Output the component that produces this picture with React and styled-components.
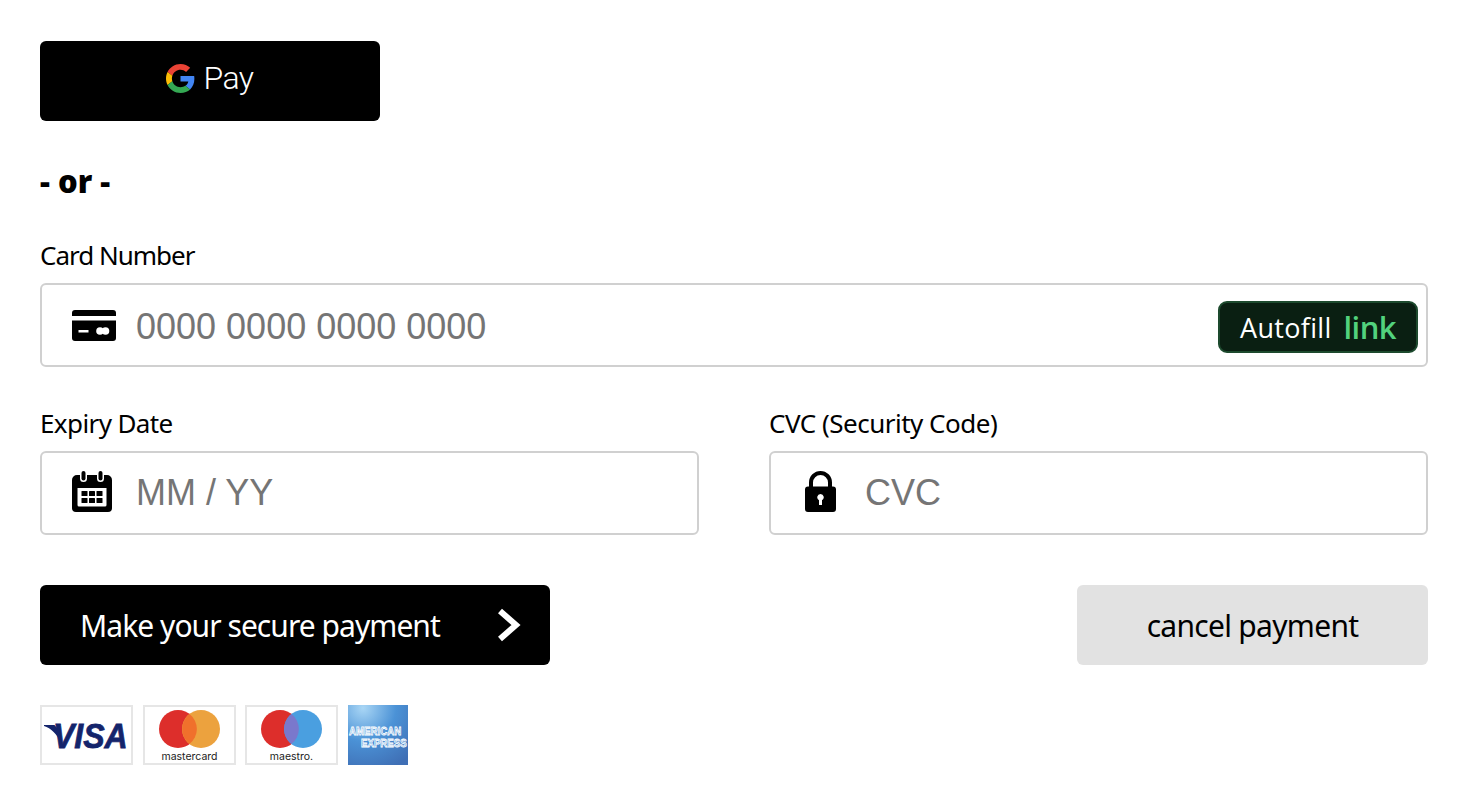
import React from 'react';
import styled, { createGlobalStyle } from 'styled-components';

const GlobalStyle = createGlobalStyle`
  html,
  body {
    margin: 0;
    background: #fff;
    color: #000;
    font-family: 'Noto Sans', 'Open Sans', sans-serif;
  }
`;

const Page = styled.form`
  box-sizing: border-box;
  width: 1478px;
  height: 808px;
  padding: 41px 50px 0 40px;
  display: flex;
  flex-direction: column;
`;

const Button = styled.button`
  display: flex;
  align-items: center;
  height: 80px;
  padding: 0;
  border: 0;
  border-radius: 6px;
  font-family: inherit;
`;

const GooglePayButton = styled(Button)`
  width: 340px;
  justify-content: center;
  gap: 8px;
  padding-bottom: 6px;
  background: #000;
  color: #fff;
`;

const PayText = styled.span`
  font-family: Roboto, sans-serif;
  font-size: 32px;
  font-weight: 300;
  letter-spacing: -0.5px;
  line-height: 1;
`;

const Or = styled.div`
  margin-top: 42px;
  font-size: 31px;
  font-weight: 900;
  line-height: 36px;
`;

const Label = styled.label`
  display: block;
  height: 36px;
  font-size: 26px;
  line-height: 34px;
  letter-spacing: ${(p) => p.$tracking}px;
  margin-bottom: 9px;
`;

const CardBlock = styled.div`
  margin-top: 39px;
`;

const Row = styled.div`
  display: grid;
  grid-template-columns: 1fr 1fr;
  column-gap: 70px;
  margin-top: 39px;
`;

const Field = styled.div`
  box-sizing: border-box;
  display: flex;
  align-items: center;
  height: 84px;
  padding: 0 8px 0 30px;
  border: 2px solid #d0d0d0;
  border-radius: 6px;
`;

const IconSlot = styled.span`
  flex: none;
  box-sizing: border-box;
  width: 46px;
  height: 46px;
  margin: 0 18px ${(p) => p.$lift || 0}px 0;
  padding-left: ${(p) => p.$inset || 0}px;
  display: flex;
  align-items: center;
`;

const Input = styled.input`
  flex: 1;
  min-width: 0;
  padding: 0;
  margin-top: ${(p) => p.$drop || 0}px;
  border: 0;
  outline: 0;
  background: transparent;
  font-family: 'Liberation Sans', Arial, sans-serif;
  font-size: 36px;

  &::placeholder {
    color: #757575;
    opacity: 1;
  }
`;

const Autofill = styled.span`
  flex: none;
  box-sizing: border-box;
  width: 200px;
  height: 52px;
  margin-top: 4px;
  display: flex;
  align-items: center;
  justify-content: center;
  gap: 12px;
  border: 2px solid #1d4a2e;
  border-radius: 9px;
  background: #0a1f12;
  color: #fff;
  font-family: 'Open Sans', sans-serif;
  font-size: 27px;
  letter-spacing: 0.3px;
`;

const AutofillBrand = styled.b`
  color: #52d27d;
  font-size: 31px;
  font-weight: 600;
  letter-spacing: -0.6px;
  line-height: 1;
`;

const Actions = styled.div`
  display: flex;
  justify-content: space-between;
  margin-top: 50px;
`;

const PayButton = styled(Button)`
  width: 510px;
  justify-content: space-between;
  padding: 0 29px 0 40px;
  background: #000;
  color: #fff;
  font-size: 30px;
  letter-spacing: -0.95px;
`;

const CancelButton = styled(Button)`
  width: 351px;
  justify-content: center;
  background: #e2e2e2;
  color: #000;
  font-size: 30px;
  letter-spacing: -0.7px;
`;

const Cards = styled.div`
  display: flex;
  gap: 9.67px;
  margin-top: 40px;
`;

const CardLogo = styled.div`
  box-sizing: border-box;
  width: ${(p) => (p.$bare ? 60 : 93)}px;
  height: 60px;
  border: ${(p) => (p.$bare ? 0 : '2px solid #e6e6e6')};
  background: #fff;

  svg {
    display: block;
  }
`;

const GoogleG = () => (
  <svg width="29" height="29" viewBox="0 0 48 48">
    <path fill="#EA4335" d="M24 9.5c3.54 0 6.71 1.22 9.21 3.6l6.85-6.85C35.9 2.38 30.47 0 24 0 14.62 0 6.51 5.38 2.56 13.22l7.98 6.19C12.43 13.72 17.74 9.5 24 9.5z" />
    <path fill="#4285F4" d="M46.98 24.55c0-1.57-.15-3.09-.38-4.55H24v9.02h12.94c-.58 2.96-2.26 5.48-4.78 7.18l7.73 6c4.51-4.18 7.09-10.36 7.09-17.65z" />
    <path fill="#FBBC05" d="M10.53 28.59c-.48-1.45-.76-2.99-.76-4.59s.27-3.14.76-4.59l-7.98-6.19C.92 16.46 0 20.12 0 24c0 3.88.92 7.54 2.56 10.78l7.97-6.19z" />
    <path fill="#34A853" d="M24 48c6.48 0 11.93-2.13 15.89-5.81l-7.73-6c-2.15 1.45-4.92 2.3-8.16 2.3-6.26 0-11.57-4.22-13.47-9.91l-7.98 6.19C6.51 42.62 14.62 48 24 48z" />
  </svg>
);

const CardIcon = () => (
  <svg width="44" height="31" viewBox="0 0 44 31">
    <path d="M3 0h38a3 3 0 0 1 3 3v3H0V3a3 3 0 0 1 3-3z" />
    <path d="M0 10.500h44V28a3 3 0 0 1-3 3H3a3 3 0 0 1-3-3z" />
    <rect x="6.500" y="20" width="10" height="2.500" fill="#fff" />
    <circle cx="28" cy="21" r="3.800" fill="#fff" />
    <circle cx="33.500" cy="21" r="3.800" fill="#fff" />
  </svg>
);

const CalendarIcon = () => (
  <svg width="40" height="41" viewBox="0 0 40 41">
    <path
      fillRule="evenodd"
      d="M5 4h3v3.500a3.500 3.500 0 0 0 7 0V4h10v3.500a3.500 3.500 0 0 0 7 0V4h3a5 5 0 0 1 5 5v28a4 4 0 0 1-4 4H4a4 4 0 0 1-4-4V9a5 5 0 0 1 5-5zM5.500 17v17a1.500 1.500 0 0 0 1.500 1.500h26a1.500 1.500 0 0 0 1.500-1.500V17z"
    />
    <rect x="9.500" y="0" width="4" height="9.500" rx="2" />
    <rect x="26.500" y="0" width="4" height="9.500" rx="2" />
    <rect x="9.500" y="20" width="6" height="5" rx="0.500" />
    <rect x="17" y="20" width="6" height="5" rx="0.500" />
    <rect x="24.500" y="20" width="6" height="5" rx="0.500" />
    <rect x="9.500" y="27" width="6" height="5" rx="0.500" />
    <rect x="17" y="27" width="6" height="5" rx="0.500" />
    <rect x="24.500" y="27" width="6" height="5" rx="0.500" />
  </svg>
);

const LockIcon = () => (
  <svg width="31" height="41" viewBox="0 0 31 41">
    <path
      fillRule="evenodd"
      d="M4 15.500V11.500a11.500 11.500 0 0 1 23 0v4h1a3 3 0 0 1 3 3V38a3 3 0 0 1-3 3H3a3 3 0 0 1-3-3V18.500a3 3 0 0 1 3-3zM8 15.500h15v-4a7.500 7.500 0 0 0-15 0zM15.500 23a3.300 3.300 0 0 0-1.500 6.200V34h3v-4.800A3.300 3.300 0 0 0 15.500 23z"
    />
  </svg>
);

const Chevron = () => (
  <svg width="24" height="34" viewBox="0 0 24 34">
    <path d="M3 3l16 14L3 31" fill="none" stroke="#fff" strokeWidth="6" />
  </svg>
);

const Visa = () => (
  <svg width="89" height="56" viewBox="0 0 89 56">
    <path d="M2 18h10.500l2.500 3 4 15C15 27 9 21 2 19z" fill="#14246b" />
    <text transform="translate(11 41) scale(0.89 1)" fontFamily="'Liberation Sans', sans-serif" fontSize="36" fontWeight="700" fontStyle="italic" fill="#14246b" stroke="#14246b" strokeWidth="0.8">VISA</text>
  </svg>
);

const Circles = ({ right, middle, cx }) => (
  <>
    <circle cx={cx} cy="22" r="19" fill="#dd2e2b" />
    <circle cx={cx + 23} cy="22" r="19" fill={right} />
    <path d={`M${cx + 11.5} 7a19 19 0 0 1 0 30a19 19 0 0 1 0-30z`} fill={middle} />
  </>
);

const Mastercard = () => (
  <svg width="89" height="56" viewBox="0 0 89 56">
    <Circles cx={33} right="#eca23e" middle="#f0702c" />
    <text x="44.500" y="53" textAnchor="middle" fontFamily="Inter, sans-serif" fontSize="10.500" fill="#222">mastercard</text>
  </svg>
);

const Maestro = () => (
  <svg width="89" height="56" viewBox="0 0 89 56">
    <Circles cx={33} right="#4a9fe0" middle="#7a78cc" />
    <text x="44.500" y="53" textAnchor="middle" fontFamily="Inter, sans-serif" fontSize="10.500" fill="#222">maestro.</text>
  </svg>
);

const Amex = () => (
  <svg width="60" height="60" viewBox="0 0 60 60">
    <defs>
      <radialGradient id="amexBlue" cx="25%" cy="5%" r="110%">
        <stop offset="0" stopColor="#a9d6f5" />
        <stop offset="0.5" stopColor="#4b92d6" />
        <stop offset="1" stopColor="#3f6fb5" />
      </radialGradient>
    </defs>
    <rect width="60" height="60" fill="url(#amexBlue)" />
    <g fontFamily="'Liberation Sans', sans-serif" fontWeight="700" fontSize="11" fill="#5d9fdc" stroke="#fff" strokeWidth="0.8">
      <text transform="translate(1 30) scale(0.88 1)">AMERICAN</text>
      <text transform="translate(13 42) scale(0.88 1)">EXPRESS</text>
    </g>
  </svg>
);

const App = () => (
  <>
    <GlobalStyle />
    <Page>
      <GooglePayButton type="button" aria-label="Google Pay">
        <GoogleG />
        <PayText>Pay</PayText>
      </GooglePayButton>
      <Or>- or -</Or>
      <CardBlock>
        <Label $tracking={-1}>Card Number</Label>
        <Field>
          <IconSlot><CardIcon /></IconSlot>
          <Input $drop={4} placeholder="0000 0000 0000 0000" />
          <Autofill>Autofill <AutofillBrand>link</AutofillBrand></Autofill>
        </Field>
      </CardBlock>
      <Row>
        <div>
          <Label $tracking={-0.6}>Expiry Date</Label>
          <Field>
            <IconSlot $lift={4}><CalendarIcon /></IconSlot>
            <Input placeholder="MM / YY" />
          </Field>
        </div>
        <div>
          <Label $tracking={-0.5}>CVC (Security Code)</Label>
          <Field>
            <IconSlot $lift={4} $inset={4}><LockIcon /></IconSlot>
            <Input placeholder="CVC" />
          </Field>
        </div>
      </Row>
      <Actions>
        <PayButton type="submit">Make your secure payment <Chevron /></PayButton>
        <CancelButton type="button">cancel payment</CancelButton>
      </Actions>
      <Cards>
        <CardLogo><Visa /></CardLogo>
        <CardLogo><Mastercard /></CardLogo>
        <CardLogo><Maestro /></CardLogo>
        <CardLogo $bare><Amex /></CardLogo>
      </Cards>
    </Page>
  </>
);

export default App;
